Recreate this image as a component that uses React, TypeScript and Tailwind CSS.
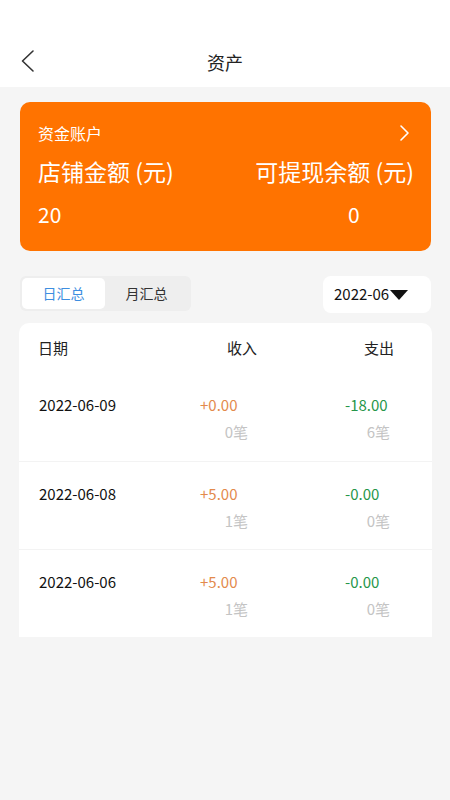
import { useState } from 'react';

type DayRow = {
    date: string;
    income: string;
    incomeCount: number;
    expense: string;
    expenseCount: number;
};

const rows: DayRow[] = [
    { date: '2022-06-09', income: '+0.00', incomeCount: 0, expense: '-18.00', expenseCount: 6 },
    { date: '2022-06-08', income: '+5.00', incomeCount: 1, expense: '-0.00', expenseCount: 0 },
    { date: '2022-06-06', income: '+5.00', incomeCount: 1, expense: '-0.00', expenseCount: 0 },
];

/**
 * Assets page: account card, day/month toggle and daily summary list
 */
function App() {
    const [tab, setTab] = useState<'day' | 'month'>('day'); // selected summary mode

    return (
        <div className="w-[450px] h-[800px] bg-[#f5f5f5] font-['Noto_Sans_CJK_SC','Noto_Sans',sans-serif] text-[#222]">
            {/* Header */}
            <div className="bg-white pt-[36px]">
                <div className="h-[51px] flex items-center justify-center relative">
                    <svg className="absolute left-[20px] top-[13px]" width="16" height="24" viewBox="0 0 16 24" fill="none">
                        <path d="M13 2 L2.5 12 L13 22" stroke="#333" strokeWidth="1.6" strokeLinecap="round" strokeLinejoin="round" />
                    </svg>
                    <span className="text-[18px] leading-none">资产</span>
                </div>
            </div>

            {/* Account card */}
            <div className="ml-[20px] w-[411px] mt-[15px] h-[149px] rounded-[10px] bg-[#ff7300] text-white pl-[18px] pr-[17px] pt-[20px]">
                <div className="flex items-center justify-between h-[22px]">
                    <span className="text-[16px] leading-[22px]">资金账户</span>
                    <svg width="12" height="18" viewBox="0 0 12 18" fill="none" className="mr-[4px]">
                        <path d="M3 2 L10 9 L3 16" stroke="#fff" strokeWidth="1.6" strokeLinecap="round" strokeLinejoin="round" />
                    </svg>
                </div>
                <div className="flex justify-between mt-[12px] text-[23px] leading-[30px]">
                    <span>店铺金额 (元)</span>
                    <span>可提现余额 (元)</span>
                </div>
                <div className="flex justify-between mt-[14px] text-[21px] leading-[28px]">
                    <span>20</span>
                    <span className="w-[66px]">0</span>
                </div>
            </div>

            {/* Toggle + month picker */}
            <div className="ml-[20px] w-[411px] mt-[25px] flex justify-between items-start">
                <div className="w-[171px] h-[35px] bg-[#eeeeee] rounded-[6px] p-[2px] flex">
                    <button
                        onClick={() => setTab('day')}
                        className={`w-[83px] h-[31px] rounded-[5px] text-[14px] ${tab === 'day' ? 'bg-white text-[#3d8ee0]' : 'text-[#333]'}`}
                    >
                        日汇总
                    </button>
                    <button
                        onClick={() => setTab('month')}
                        className={`w-[83px] h-[31px] rounded-[5px] text-[14px] ${tab === 'month' ? 'bg-white text-[#3d8ee0]' : 'text-[#333]'}`}
                    >
                        月汇总
                    </button>
                </div>
                <div className="w-[108px] h-[37px] bg-white rounded-[8px] flex items-center pl-[11px]">
                    <span className="text-[15px] text-[#111]">2022-06</span>
                    <svg width="18" height="10" viewBox="0 0 18 10" className="ml-[1px]">
                        <path d="M0 0 H18 L9 10 Z" fill="#111" />
                    </svg>
                </div>
            </div>

            {/* Daily list */}
            <div className="ml-[19px] w-[413px] mt-[10px] bg-white rounded-t-[10px]">
                <div className="h-[50px] flex items-center pl-[19px] text-[15px] text-[#222]">
                    <span className="w-[189px]">日期</span>
                    <span className="w-[137px]">收入</span>
                    <span>支出</span>
                </div>
                {rows.map((row, i) => (
                    <div key={row.date} className={`h-[88px] flex pl-[20px] pt-[21px] text-[15px] leading-[22px] ${i > 0 ? 'border-t border-[#f3f3f3]' : ''}`}>
                        <span className="w-[161px] text-[#111]">{row.date}</span>
                        <div className="w-[48px] flex flex-col">
                            <span className="text-[#e38a4c] whitespace-nowrap">{row.income}</span>
                            <span className="text-right text-[#c4c4c4] mt-[5px] whitespace-nowrap">{row.incomeCount}笔</span>
                        </div>
                        <div className="ml-[97px] w-[45px] flex flex-col">
                            <span className="text-[#26964a] whitespace-nowrap">{row.expense}</span>
                            <span className="text-right text-[#c4c4c4] mt-[5px] whitespace-nowrap">{row.expenseCount}笔</span>
                        </div>
                    </div>
                ))}
            </div>
        </div>
    );
}

export default App;
